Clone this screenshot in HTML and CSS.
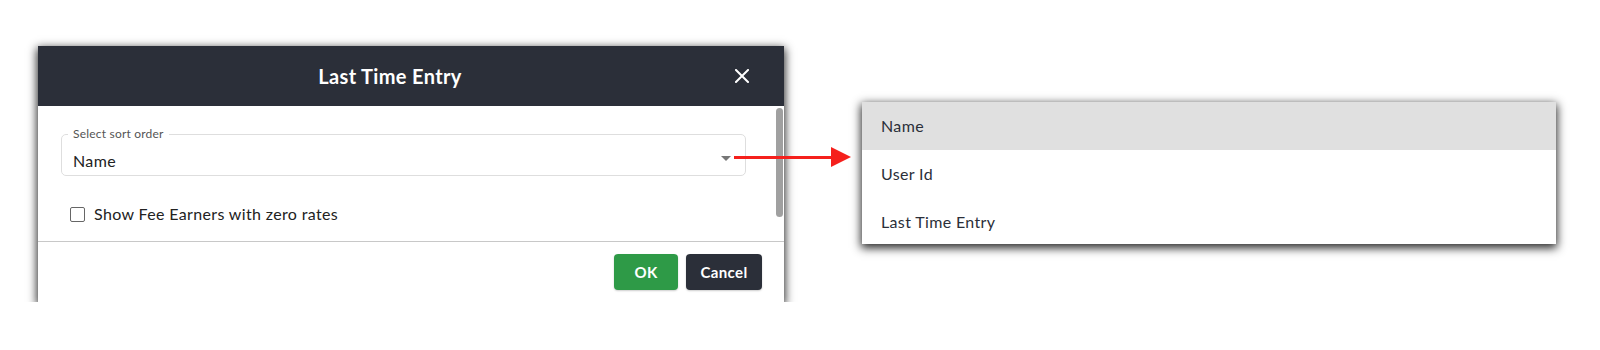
FILE: index.html
```html
<!DOCTYPE html>
<html lang="en">

<head>
    <meta charset="UTF-8">
    <meta name="viewport" content="width=device-width, initial-scale=1.0">
    <title>Last Time Entry - Sort Order</title>
    <link rel="stylesheet" href="styles.css">
</head>

<body>
    <div class="stage">
        <!-- Dialog -->
        <div class="dialog">
            <div class="dialog-header">
                <h2 class="dialog-title">Last Time Entry</h2>
                <button class="close-button" type="button" aria-label="Close">
                    <svg width="14" height="14" viewBox="0 0 14 14">
                        <path d="M1 1 L13 13 M13 1 L1 13" stroke="#fff" stroke-width="2" stroke-linecap="square" />
                    </svg>
                </button>
            </div>

            <div class="dialog-body">
                <div class="dialog-content">
                    <fieldset class="select-field">
                        <legend>Select sort order</legend>
                        <div class="select-value">
                            <span>Name</span>
                            <span class="select-caret"></span>
                        </div>
                    </fieldset>

                    <label class="check-row">
                        <span class="check-box"></span>
                        Show Fee Earners with zero rates
                    </label>
                </div>
                <div class="scroll-rail">
                    <div class="scroll-thumb"></div>
                </div>
            </div>

            <div class="dialog-footer">
                <button class="btn btn-ok" type="button">OK</button>
                <button class="btn btn-cancel" type="button">Cancel</button>
            </div>
        </div>

        <!-- Opened dropdown list -->
        <ul class="option-list">
            <li class="selected">Name</li>
            <li>User Id</li>
            <li>Last Time Entry</li>
        </ul>

        <!-- Annotation arrow -->
        <div class="pointer-arrow">
            <span class="arrow-line"></span>
            <span class="arrow-head"></span>
        </div>
    </div>
</body>

</html>
```

FILE: styles.css
```css
body {
    font-family: Lato, "Open Sans", sans-serif;
    letter-spacing: 0.35px;
    background-color: #fff;
    margin: 0;
    padding: 0;
    color: #2b2f39;
}

.stage {
    display: flex;
    align-items: flex-start;
    padding: 46px 0 0 38px;
    position: relative; /* for the arrow */
}

/* Dialog */
.dialog {
    width: 746px;
    background-color: #fff;
    box-shadow: 0 3px 9px 1px rgba(0, 0, 0, 0.85);
}

.dialog-header {
    height: 60px;
    background-color: #2b2f39;
    display: flex;
    align-items: center;
    padding: 0 21px;
}

.dialog-title {
    flex: 1;
    margin: 0;
    text-align: center;
    color: #fff;
    font-size: 20px;
    font-weight: bold;
}

.close-button {
    width: 42px;
    height: 42px;
    background: none;
    border: none;
    padding: 0;
    display: flex;
    align-items: center;
    justify-content: center;
    cursor: pointer;
}

.dialog-body {
    display: flex;
    border-bottom: 1px solid #c8c8c8;
}

.dialog-content {
    flex: 1;
    padding: 22px 30px 17px 23px;
}

.select-field {
    margin: 0;
    padding: 0 14px 4px 6px;
    border: 1px solid #dedede;
    border-radius: 5px;
}

.select-field legend {
    font-size: 12px;
    line-height: 12px;
    color: #555;
    padding: 0 5px;
    letter-spacing: 0.2px;
}

.select-value {
    display: flex;
    justify-content: space-between;
    align-items: center;
    padding: 11px 0 0 5px;
    font-size: 16px;
    line-height: 20px;
    color: #222;
}

.select-caret {
    width: 0;
    height: 0;
    border-left: 5px solid transparent;
    border-right: 5px solid transparent;
    border-top: 5px solid #777;
    margin-top: -6px;
}

.check-row {
    display: flex;
    align-items: center;
    gap: 9px;
    margin: 28px 0 0 9px;
    font-size: 16px;
    line-height: 20px;
    color: #222;
}

.check-box {
    width: 13px;
    height: 13px;
    border: 1px solid #666;
    border-radius: 2px;
}

.scroll-rail {
    width: 7px;
    margin-right: 1px;
    padding-top: 2px;
}

.scroll-thumb {
    height: 109px;
    background-color: #a0a0a0;
    border-radius: 4px;
}

.dialog-footer {
    display: flex;
    justify-content: flex-end;
    gap: 8px;
    padding: 12px 22px 12px 0;
}

.btn {
    height: 36px;
    border: none;
    border-radius: 4px;
    color: #fff;
    font-family: inherit;
    font-size: 15px;
    font-weight: bold;
    letter-spacing: 0.35px;
    cursor: pointer;
    box-shadow: 0 1px 2px rgba(0, 0, 0, 0.2);
}

.btn-ok {
    width: 64px;
    background-color: #2e9a47;
}

.btn-cancel {
    width: 76px;
    background-color: #2b2f39;
}

/* Dropdown list */
.option-list {
    list-style-type: none;
    margin: 56px 0 0 78px;
    padding: 0;
    width: 694px;
    height: 142px;
    overflow: hidden;
    background-color: #fff;
    box-shadow: 0 3px 9px 1px rgba(0, 0, 0, 0.85);
}

.option-list li {
    height: 48px;
    line-height: 48px;
    padding-left: 19px;
    font-size: 16px;
    color: #2b2f39;
}

.option-list li.selected {
    background-color: #e0e0e0;
}

/* Red arrow pointing from the select to the list */
.pointer-arrow {
    position: absolute;
    left: 734px;
    top: 147px;
    display: flex;
    align-items: center;
    height: 20px;
}

.arrow-line {
    width: 97px;
    height: 3px;
    background-color: #f5201c;
}

.arrow-head {
    width: 0;
    height: 0;
    border-top: 10px solid transparent;
    border-bottom: 10px solid transparent;
    border-left: 20px solid #f5201c;
}
```
